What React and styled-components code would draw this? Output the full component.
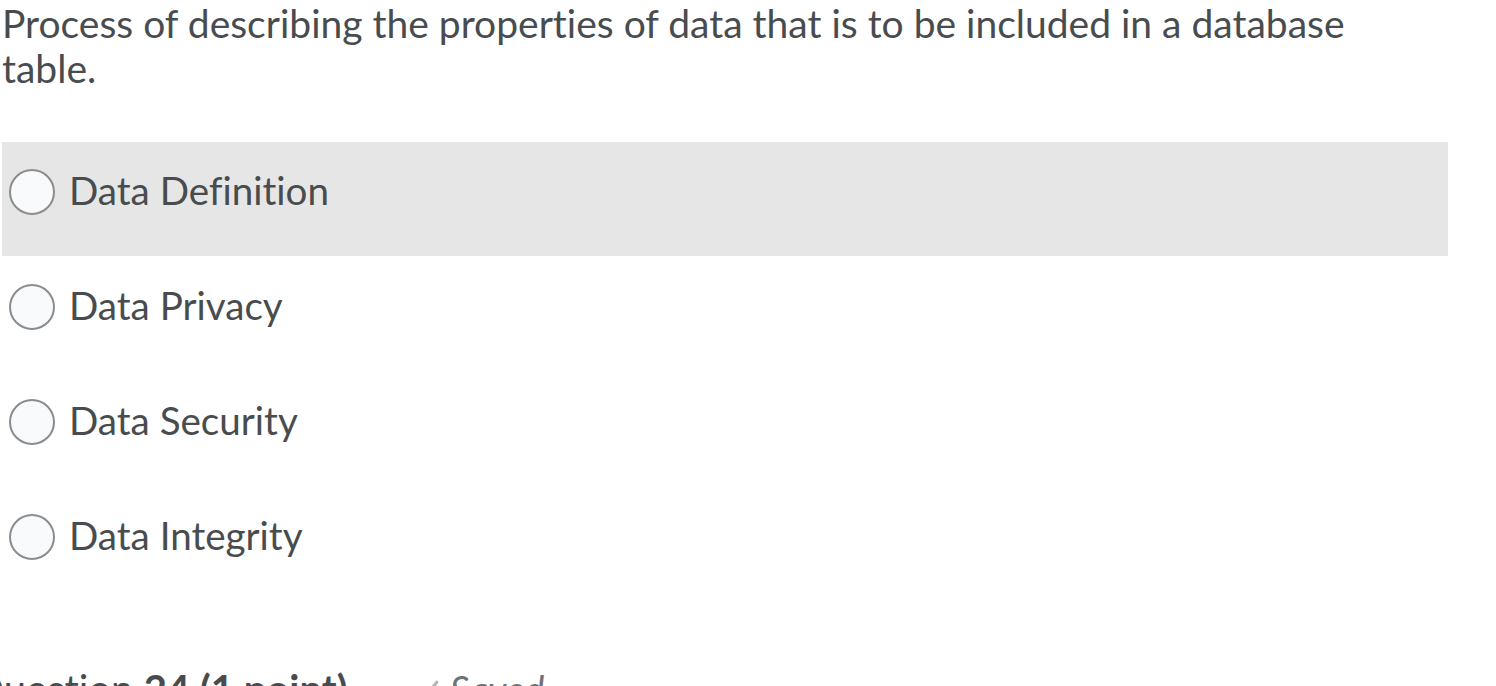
import React, { useState } from "react";
import styled, { createGlobalStyle } from "styled-components";

const GlobalStyle = createGlobalStyle`
  html, body {
    margin: 0;
    padding: 0;
    background: #ffffff;
    overflow: hidden;
  }
  body {
    font-family: Lato, "Open Sans", sans-serif;
    color: #494c4e;
    font-variant-ligatures: none;
    font-feature-settings: "liga" 0;
  }
`;

const Page = styled.div`
  width: 1496px;
  height: 686px;
  padding-left: 2px;
  box-sizing: border-box;
  overflow: hidden;
`;

const QuestionText = styled.p`
  margin: 0;
  width: 1400px;
  font-size: 39px;
  line-height: 45px;
  padding-top: 1px;
`;

const Options = styled.div`
  display: flex;
  flex-direction: column;
  width: 1446px;
  margin-top: 51px;
`;

const Option = styled.label`
  display: flex;
  align-items: center;
  gap: 14px;
  height: ${(p) => (p.$first ? "114px" : "115px")};
  padding: 0 0 18px 7px;
  box-sizing: border-box;
  background: ${(p) => (p.$hover ? "#e6e6e6" : "transparent")};
  cursor: pointer;
  font-size: 38.6px;
`;

const Radio = styled.span`
  width: 46px;
  height: 46px;
  margin-top: 4px;
  border-radius: 50%;
  border: 2px solid #8a8d8f;
  background: #f9fafb;
  box-sizing: border-box;
  flex-shrink: 0;
`;

const Footer = styled.div`
  display: flex;
  align-items: baseline;
  gap: 66px;
  margin-top: 64px;
  margin-left: -30px;
`;

const Heading = styled.h2`
  margin: 0;
  font-size: 40px;
  font-weight: 400;
  color: #494c4e;
  b {
    font-weight: 700;
  }
`;

const Saved = styled.span`
  display: flex;
  align-items: baseline;
  gap: 10px;
  font-size: 38px;
  font-style: italic;
  color: #6e7376;
`;

const options = ["Data Definition", "Data Privacy", "Data Security", "Data Integrity"];

export default function App() {
  const [hover, setHover] = useState(0);

  return (
    <Page>
      <GlobalStyle />
      <QuestionText>
        Process of describing the properties of data that is to be included in a database table.
      </QuestionText>
      <Options>
        {options.map((o, i) => (
          <Option key={o} $first={i === 0} $hover={hover === i} onMouseEnter={() => setHover(i)}>
            <Radio />
            {o}
          </Option>
        ))}
      </Options>
      <Footer>
        <Heading>
          Question <b>24 (1 point)</b>
        </Heading>
        <Saved>
          <svg width="26" height="26" viewBox="0 0 24 24" fill="none" stroke="#b5b8ba" strokeWidth="3" strokeLinecap="round">
            <path d="M3 13l6 6L21 4" />
          </svg>
          Saved
        </Saved>
      </Footer>
    </Page>
  );
}
